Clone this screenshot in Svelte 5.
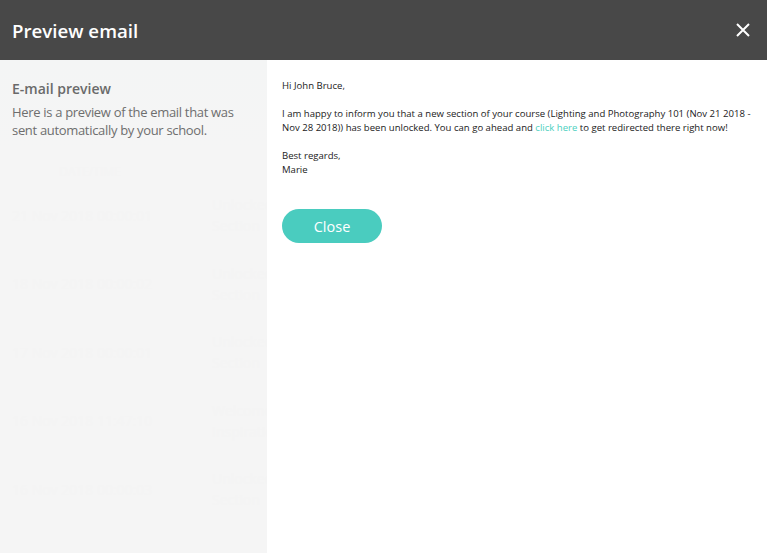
<script lang="ts">
  // faint rows of the page behind the modal, they show through the sidebar
  const rows = [
    { date: "21 Nov 2018 00:00:01", title: "Unlocked", sub: "Section" },
    { date: "18 Nov 2018 00:00:02", title: "Unlocked", sub: "Section" },
    { date: "17 Nov 2018 00:00:01", title: "Unlocked", sub: "Section" },
    { date: "16 Nov 2018 11:47:10", title: "Welcome", sub: "Inspiration" },
    { date: "16 Nov 2018 00:00:03", title: "Unlocked", sub: "Section" },
  ];
</script>

<div class="modal">
  <header>
    <h1>Preview email</h1>
    <button class="x" aria-label="Close">
      <svg width="14" height="14" viewBox="0 0 14 14">
        <path d="M1 1 13 13M13 1 1 13" stroke="#fff" stroke-width="2" fill="none" />
      </svg>
    </button>
  </header>

  <div class="body">
    <aside>
      <h2>E-mail preview</h2>
      <p class="intro">Here is a preview of the email that was sent automatically by your school.</p>

      <div class="ghost" aria-hidden="true">
        <div class="ghost-head">DATE/TIME</div>
        {#each rows as row}
          <div class="ghost-row">
            <span class="date">{row.date}</span>
            <span class="what">{row.title}<br />{row.sub}</span>
          </div>
        {/each}
      </div>
    </aside>

    <main>
      <p>Hi John Bruce,</p>
      <p>
        I am happy to inform you that a new section of your course (Lighting and Photography 101 (Nov 21 2018 -
        Nov 28 2018)) has been unlocked. You can go ahead and <a href="#top">click here</a> to get redirected there right now!
      </p>
      <p>Best regards,<br />Marie</p>
      <button class="close">Close</button>
    </main>
  </div>
</div>

<style>
  :global(body) {
    margin: 0;
    background: #fff;
  }
  .modal {
    width: 767px;
    height: 553px;
    display: flex;
    flex-direction: column;
    overflow: hidden;
    font-family: "Open Sans", "Noto Sans", sans-serif;
  }
  header {
    height: 60px;
    flex: none;
    background: #484848;
    display: flex;
    align-items: center;
    justify-content: space-between;
    padding: 0 17px 0 12px;
  }
  h1 {
    margin: 0;
    color: #fff;
    font-size: 18.7px;
    font-weight: 600;
  }
  .x {
    background: none;
    border: 0;
    padding: 0;
    display: flex;
  }
  .body {
    flex: 1;
    display: flex;
    min-height: 0;
  }
  aside {
    width: 267px;
    flex: none;
    box-sizing: border-box;
    background: linear-gradient(#f4f5f5, #f5f5f5 90px);
    padding: 20px 12px 0;
    overflow: hidden;
    color: #6e6e6e;
  }
  h2 {
    margin: 0 0 5px;
    font-size: 14px;
    line-height: 18px;
    font-weight: 600;
    color: #6a6a6a;
  }
  .intro {
    margin: 0;
    font-size: 13px;
    line-height: 18px;
    letter-spacing: -0.32px;
  }
  .ghost {
    margin-top: 24px;
    font-size: 14px;
    color: #f4f4f4;
    white-space: nowrap;
  }
  .ghost-head {
    text-align: center;
    width: 156px;
    font-size: 12px;
    margin-bottom: 1px;
  }
  .ghost-row {
    display: flex;
    align-items: center;
    height: 68.5px;
  }
  .date {
    width: 200px;
    flex: none;
    font-size: 14px;
  }
  .what {
    line-height: 21px;
  }
  main {
    flex: 1;
    padding: 19px 12px 0 15px;
    font-size: 9.57px;
    line-height: 14px;
    color: #222;
  }
  main p {
    margin: 0 0 14px;
  }
  a {
    color: #4ccfc0;
    text-decoration: none;
  }
  .close {
    display: block;
    margin-top: 32px;
    width: 100px;
    height: 34px;
    border: 0;
    border-radius: 17px;
    background: #4accbf;
    color: #fff;
    font-family: "Open Sans", sans-serif;
    font-size: 14.5px;
  }
</style>
